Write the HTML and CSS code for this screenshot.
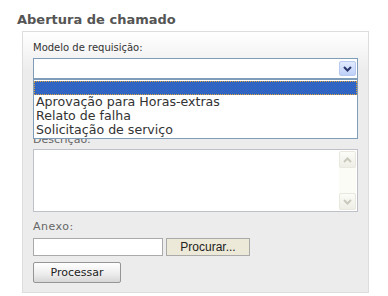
FILE: index.html
```html
<!DOCTYPE html>
<html lang="pt">
<head>
    <meta charset="UTF-8">
    <title>Abertura de chamado</title>
    <link rel="stylesheet" href="styles.css">
</head>
<body>
    <div class="page">
        <h2 class="title">Abertura de chamado</h2>
        <div class="panel">
            <p class="label">Modelo de requisição:</p>
            <div class="selectWrap">
                <div class="selectBox">
                    <span class="selectArrow">
                        <svg width="9" height="6" viewBox="0 0 9 6"><path d="M1 1 L4.5 4.5 L8 1" fill="none" stroke="#29356b" stroke-width="2"/></svg>
                    </span>
                </div>
                <div class="selectList">
                    <div class="opt optActive"></div>
                    <div class="opt">Aprovação para Horas-extras</div>
                    <div class="opt">Relato de falha</div>
                    <div class="opt">Solicitação de serviço</div>
                </div>
            </div>
            <p class="label labelDesc">Descrição:</p>
            <div class="textBox">
                <div class="scrollBar">
                    <span class="scrollBtn">
                        <svg width="9" height="6" viewBox="0 0 9 6"><path d="M1 5 L4.5 1.5 L8 5" fill="none" stroke="#c9c9bd" stroke-width="2"/></svg>
                    </span>
                    <span class="scrollBtn">
                        <svg width="9" height="6" viewBox="0 0 9 6"><path d="M1 1 L4.5 4.5 L8 1" fill="none" stroke="#c9c9bd" stroke-width="2"/></svg>
                    </span>
                </div>
            </div>
            <p class="label labelAnexo">Anexo:</p>
            <div class="fileRow">
                <div class="fileInput"></div>
                <button class="browseBtn">Procurar...</button>
            </div>
            <button class="submitBtn">Processar</button>
        </div>
    </div>
</body>
</html>
```

FILE: styles.css
```css
*{
    padding: 0px;
    margin: 0px;
    box-sizing: border-box;
}
body{
    width: 100%;
    background-color: white;
    font-family: "DejaVu Sans", Verdana, sans-serif;
}
.page{
    padding: 12px 0 0 17px;
}
.title{
    font-size: 13px;
    font-weight: bold;
    color: rgb(85, 85, 85);
    line-height: 16px;
    margin-bottom: 3px;
}
.panel{
    width: 347px;
    margin-left: 5px;
    border: 1px solid rgb(221, 221, 221);
    background: linear-gradient(rgb(255, 255, 255), rgb(236, 236, 236) 40px);
    padding: 9px 10px 9px 10px;
}
.label{
    font-size: 10px;
    color: rgb(51, 51, 51);
    line-height: 13px;
}
.selectWrap{
    position: relative;
    width: 325px;
    margin-top: 4px;
}
.selectBox{
    height: 21px;
    border: 1px solid rgb(127, 157, 185);
    background-color: white;
    display: flex;
    justify-content: flex-end;
    align-items: center;
    padding-right: 1px;
}
.selectArrow{
    width: 17px;
    height: 15px;
    border: 1px solid rgb(185, 201, 239);
    border-radius: 2px;
    background: linear-gradient(rgb(225, 234, 254), rgb(190, 208, 248));
    display: flex;
    align-items: center;
    justify-content: center;
}
.selectList{
    position: absolute;
    top: 21px;
    left: 0;
    width: 325px;
    border: 1px solid rgb(127, 157, 185);
    background-color: white;
    padding: 1px 0;
    z-index: 2;
}
.opt{
    height: 14px;
    font-size: 12.6px;
    line-height: 14px;
    color: rgb(51, 51, 51);
    padding-left: 2px;
    white-space: nowrap;
}
.optActive{
    background-color: rgb(49, 101, 196);
    outline: 1px dotted rgb(220, 160, 60);
    outline-offset: -1px;
}
.labelDesc{
    margin-top: 54px;
    font-size: 11px;
    color: rgb(102, 102, 102);
}
.textBox{
    width: 325px;
    height: 63px;
    margin-top: 3px;
    border: 1px solid rgb(190, 194, 200);
    background-color: white;
    display: flex;
    justify-content: flex-end;
    padding: 1px;
}
.scrollBar{
    width: 17px;
    background-color: rgb(252, 252, 246);
    display: flex;
    flex-direction: column;
    justify-content: space-between;
}
.scrollBtn{
    height: 17px;
    border: 1px solid rgb(232, 232, 222);
    border-radius: 2px;
    background: linear-gradient(rgb(252, 252, 248), rgb(238, 238, 230));
    display: flex;
    align-items: center;
    justify-content: center;
}
.labelAnexo{
    margin-top: 8px;
    font-size: 11px;
    color: rgb(102, 102, 102);
    letter-spacing: 0.5px;
}
.fileRow{
    display: flex;
    gap: 3px;
    margin-top: 5px;
}
.fileInput{
    width: 130px;
    height: 18px;
    border: 1px solid rgb(170, 170, 170);
    background-color: white;
}
.browseBtn{
    width: 84px;
    height: 18px;
    border: 1px solid rgb(170, 170, 170);
    background-color: rgb(236, 233, 216);
    font-family: "Liberation Sans", Arial, sans-serif;
    font-size: 12px;
    color: rgb(34, 34, 34);
}
.submitBtn{
    display: block;
    margin-top: 6px;
    width: 88px;
    height: 21px;
    border: 1px solid rgb(150, 150, 150);
    border-radius: 2px;
    background: linear-gradient(rgb(255, 255, 255), rgb(236, 236, 236) 60%, rgb(214, 214, 214));
    font-family: "DejaVu Sans", Verdana, sans-serif;
    font-size: 11px;
    color: rgb(34, 34, 34);
}
```
